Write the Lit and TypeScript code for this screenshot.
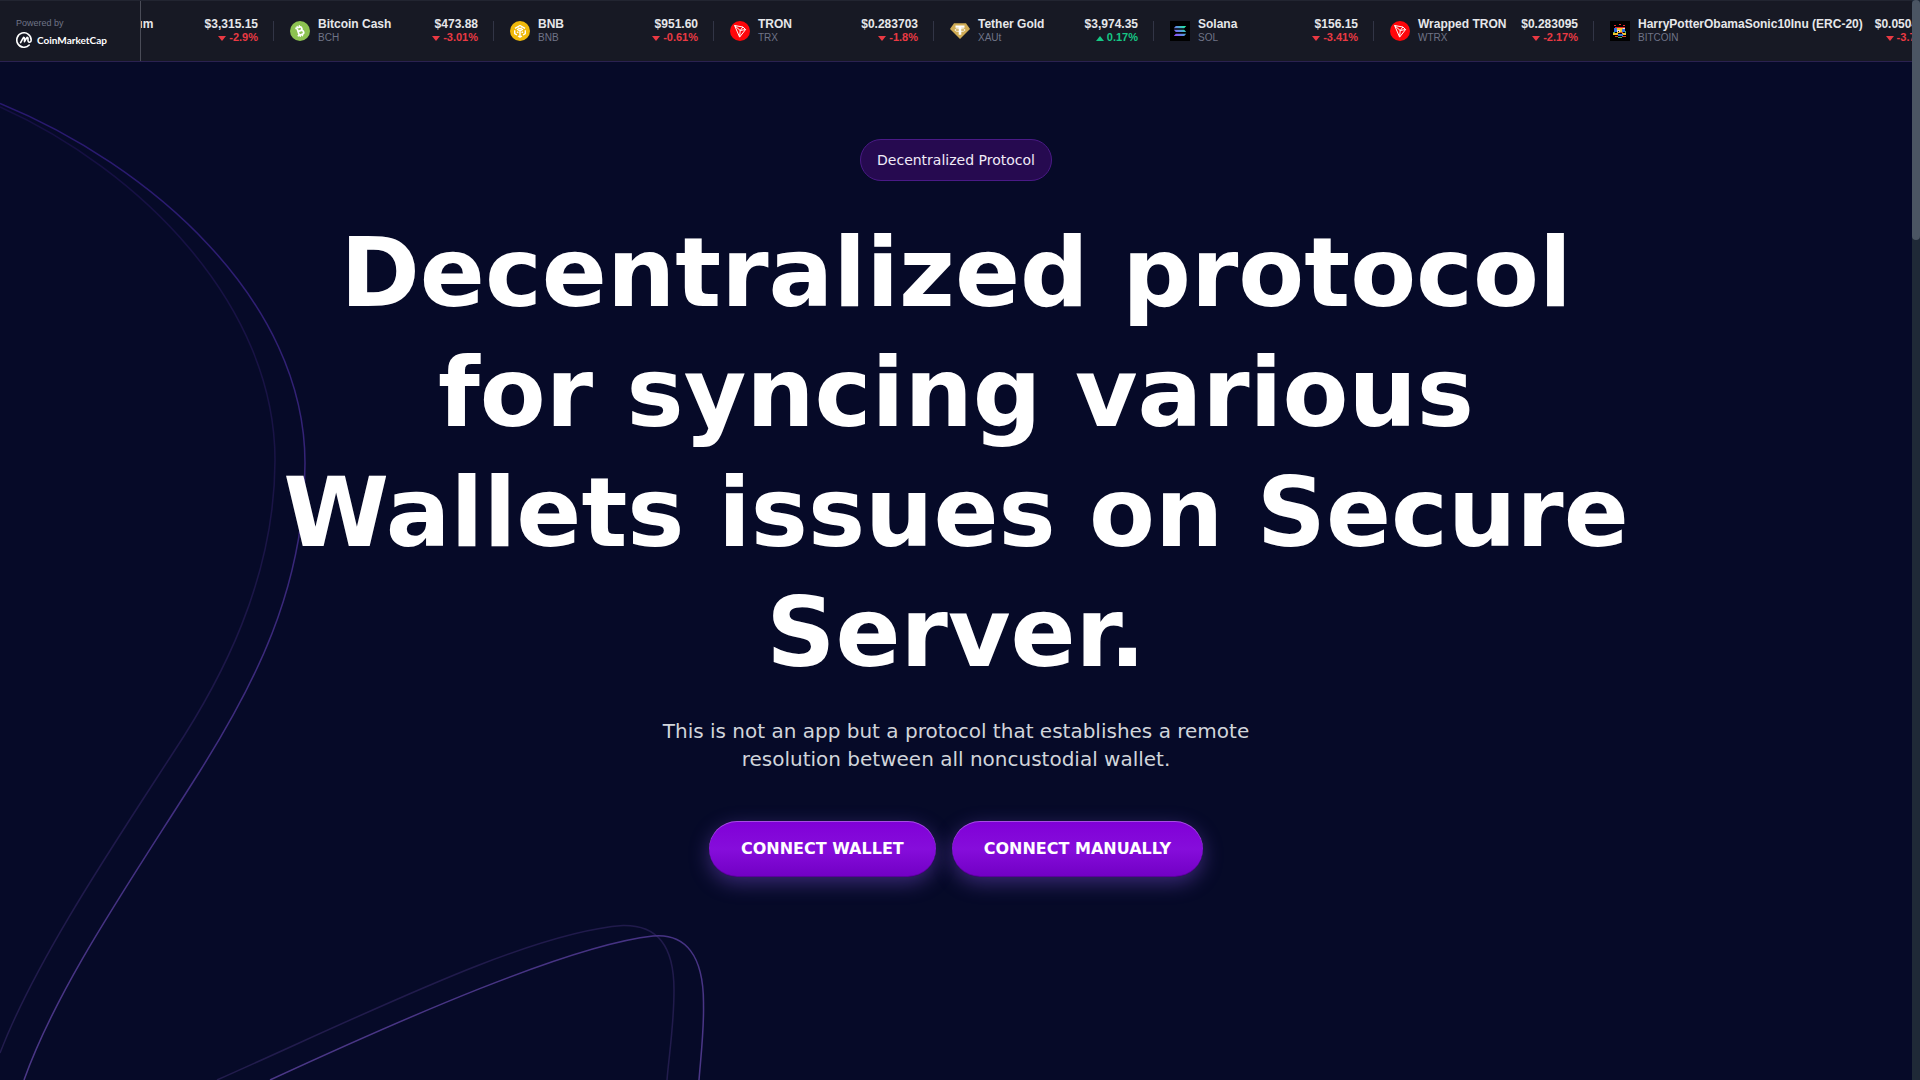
import { LitElement, html, css, svg, TemplateResult } from "lit";
import { customElement, property } from "lit/decorators.js";

type CoinArt = "eth" | "bch" | "bnb" | "tron" | "xaut" | "sol" | "hpos";

interface Quote {
  name: string;
  symbol: string;
  price: string;
  change: number;
  art: CoinArt;
}

const QUOTES: Quote[] = [
  { name: "Ethereum", symbol: "ETH", price: "$3,315.15", change: -2.9, art: "eth" },
  { name: "Bitcoin Cash", symbol: "BCH", price: "$473.88", change: -3.01, art: "bch" },
  { name: "BNB", symbol: "BNB", price: "$951.60", change: -0.61, art: "bnb" },
  { name: "TRON", symbol: "TRX", price: "$0.283703", change: -1.8, art: "tron" },
  { name: "Tether Gold", symbol: "XAUt", price: "$3,974.35", change: 0.17, art: "xaut" },
  { name: "Solana", symbol: "SOL", price: "$156.15", change: -3.41, art: "sol" },
  { name: "Wrapped TRON", symbol: "WTRX", price: "$0.283095", change: -2.17, art: "tron" },
  { name: "HarryPotterObamaSonic10Inu (ERC-20)", symbol: "BITCOIN", price: "$0.050412", change: -3.74, art: "hpos" },
];

const ART: Record<CoinArt, TemplateResult> = {
  eth: svg`<circle cx="10" cy="10" r="10" fill="#627eea"/>
    <path d="M10 3l4.500 7.200L10 13 5.500 10.200zM10 14l4.500-2.700L10 17.300 5.500 11.300z" fill="#fff"/>`,
  bch: svg`<circle cx="10" cy="10" r="10" fill="#8dc351"/>
    <g transform="rotate(-18 10 10)" fill="none" stroke="#fff">
      <path d="M6.300 6.100h4.400a1.800 1.800 0 0 1 0 3.700H8.300h2.800a2 2 0 0 1 0 4.100H6.300M8 6.100v7.800" stroke-width="1.700"/>
      <path d="M8.700 4.200v2M11 4.200v2M8.700 13.800v2M11 13.800v2" stroke-width="1.200"/>
    </g>`,
  bnb: svg`<circle cx="10" cy="10" r="10" fill="#f0b90b"/>
    <g fill="none" stroke="#fff" stroke-width="1.400" stroke-linejoin="round">
      <path d="M5 7.400L10 4.500l5 2.900M7 8.200l3 1.800 3-1.800M4.700 9.200v3.400l2.300 1.400M15.300 9.200v3.400L13 14M10 9.800v5.400M7 10.800l1.400.8M13 10.800l-1.400.8M8 15l2 1.100 2-1.100M8.200 6.900l1.800 1 1.800-1"/>
    </g>`,
  tron: svg`<circle cx="10" cy="10" r="10" fill="#ff060a"/>
    <path d="M4.600 4.500l8.300 1.500 2.700 2.500-6 7.600zM4.600 4.500l5.600 5 5.400-1M12.900 6l-2.700 3.500-.6 6.600" fill="none" stroke="#fff" stroke-width="1" stroke-linejoin="round"/>`,
  xaut: svg`<path d="M4 2.200h12l4 5.800-10 10L0 8z" fill="#d0ac55"/>
    <path d="M5.500 4.500h9v2.300H11.300v7H8.700v-7H5.500z" fill="#fff"/>
    <ellipse cx="10" cy="9" rx="5.200" ry="1.500" fill="none" stroke="#fff" stroke-width=".8"/>`,
  sol: svg`<defs><linearGradient id="sol-mark" x1="4" y1="15" x2="16" y2="5" gradientUnits="userSpaceOnUse">
      <stop offset="0" stop-color="#9945ff"/><stop offset=".5" stop-color="#5d8fe0"/><stop offset="1" stop-color="#19fb9b"/></linearGradient></defs>
    <rect width="20" height="20" fill="#000"/>
    <path d="M5.800 5h10.400l-2 2.300H3.800zM3.800 8.800h10.400l2 2.300H5.800zM5.800 12.700h10.400l-2 2.300H3.800z" fill="url(#sol-mark)"/>`,
  hpos: svg`<rect width="20" height="20" fill="#000"/>
    <path d="M4 4h2v1H4zM9 3h2v1H9zM13 4h2v1h-2zM5 6h10v1H5z" fill="#e3262d"/>
    <path d="M6 7h7v2H6zM3 12h5v2H3zM12 12h4v2h-4z" fill="#f4c430"/>
    <path d="M4 7h3v4H4zM12 8h3v3h-3zM8 13h5v2H8z" fill="#2f6fe0"/>
    <path d="M7 9h3v2H7zM13 7h2v1h-2z" fill="#e8e4d8"/>
    <path d="M5 15h3v1H5zM12 15h4v1h-4zM10 11h3v1h-3z" fill="#d0472c"/>
    <path d="M7 11h3v1H7zM10 9h2v2h-2z" fill="#f4c430"/>
    <path d="M8 10h1v1H8z" fill="#111"/>
    <path d="M3 11h2v1H3zM15 10h1v2h-1zM8 16h4v1H8z" fill="#4fae5a"/>`,
};

@customElement("coin-quote")
export class CoinQuote extends LitElement {
  @property({ attribute: false }) quote!: Quote;

  static styles = css`
    :host {
      display: flex;
      flex: none;
      align-items: center;
      min-width: 220px;
      box-sizing: border-box;
    }
    .quote {
      display: flex;
      flex: 1;
      align-items: center;
      gap: 8px;
      padding: 0 15px 0 16px;
      color: inherit;
      text-decoration: none;
    }
    .rule {
      width: 1px;
      height: 20px;
      background: #323546;
    }
    .art {
      width: 20px;
      height: 20px;
      flex: none;
    }
    .label,
    .value {
      display: flex;
      flex-direction: column;
      padding-bottom: 2px;
      white-space: nowrap;
    }
    .label {
      flex: 1;
    }
    .value {
      align-items: flex-end;
      margin-left: 4px;
    }
    .name,
    .price {
      font-size: 12px;
      line-height: 14px;
      font-weight: 700;
      color: #e6e7ea;
    }
    .symbol {
      font-size: 10px;
      line-height: 13px;
      color: #6f7487;
    }
    .change {
      display: flex;
      align-items: center;
      gap: 3px;
      font-size: 11px;
      line-height: 13px;
      font-weight: 700;
      color: #ea3943;
    }
    .change.up {
      color: #16c784;
    }
    .arrow {
      width: 8px;
      height: 5px;
      margin-top: 2px;
      fill: currentColor;
    }
  `;

  render() {
    const q = this.quote;
    const up = q.change > 0;
    return html`
      <a class="quote" href="#${q.symbol}">
        <svg class="art" viewBox="0 0 20 20" aria-hidden="true">${ART[q.art]}</svg>
        <span class="label">
          <span class="name">${q.name}</span>
          <span class="symbol">${q.symbol}</span>
        </span>
        <span class="value">
          <span class="price">${q.price}</span>
          <span class="change ${up ? "up" : "down"}">
            <svg class="arrow" viewBox="0 0 8 5" aria-hidden="true">
              <path d=${up ? "M0 5L4 0l4 5z" : "M0 0h8L4 5z"} />
            </svg>
            ${q.change}%
          </span>
        </span>
      </a>
      <span class="rule"></span>
    `;
  }
}

@customElement("price-ticker")
export class PriceTicker extends LitElement {
  /* Distance, in pixels, that the strip has scrolled to the left. */
  @property({ type: Number }) scrolled = 87;

  static styles = css`
    :host {
      display: flex;
      height: 60px;
      border-top: 1px solid #222531;
      border-bottom: 1px solid #2a2150;
      background: #171924;
      font-family: "Liberation Sans", Arial, sans-serif;
    }
    .source {
      display: flex;
      flex-direction: column;
      justify-content: center;
      gap: 3px;
      box-sizing: border-box;
      width: 141px;
      flex: none;
      padding: 2px 0 0 16px;
      border-right: 1px solid #4a4c57;
      color: #fff;
      text-decoration: none;
    }
    .powered {
      font-size: 9px;
      line-height: 12px;
      color: #6f7487;
    }
    .brand {
      display: flex;
      align-items: center;
      gap: 5px;
      font-family: Lato, sans-serif;
      font-weight: 700;
      font-size: 10px;
      line-height: 16px;
    }
    .mark {
      width: 16px;
      height: 16px;
    }
    .window {
      flex: 1;
      min-width: 0;
      overflow: hidden;
      display: flex;
    }
    .strip {
      display: flex;
      flex: none;
    }
  `;

  render() {
    return html`
      <a class="source" href="#coinmarketcap">
        <span class="powered">Powered by</span>
        <span class="brand">
          <svg class="mark" viewBox="0 0 16 16" fill="none" stroke="#fff" stroke-width="1.600" stroke-linecap="round" stroke-linejoin="round" aria-hidden="true">
            <path d="M13.200 13A7.200 7.200 0 1 1 15.200 8c0 2.600-2.700 3-3.200.9V6.300c0-1-.9-1.200-1.300-.4L8.500 9.700V6.300c0-1-.9-1.200-1.300-.4L4.600 10.600" />
          </svg>
          CoinMarketCap
        </span>
      </a>
      <div class="window">
        <div class="strip" style="transform: translateX(${-this.scrolled}px)">
          ${QUOTES.map((q) => html`<coin-quote .quote=${q}></coin-quote>`)}
        </div>
      </div>
    `;
  }
}

@customElement("app-root")
export class AppRoot extends LitElement {
  static styles = css`
    :host {
      display: flex;
      min-height: 100vh;
      background: #060a28;
      color: #fff;
      font-family: "DejaVu Sans", sans-serif;
    }
    .page {
      position: relative;
      flex: 1;
      min-width: 0;
      display: flex;
      flex-direction: column;
    }
    .waves {
      position: absolute;
      left: 0;
      top: 0;
      width: 720px;
      height: 1080px;
      fill: none;
      pointer-events: none;
    }
    .hero {
      position: relative;
      display: flex;
      flex-direction: column;
      align-items: center;
      padding: 77px 24px 80px;
      text-align: center;
    }
    .badge {
      padding: 10px 16px;
      border: 1px solid #4a1a86;
      border-radius: 21px;
      background: #260a50;
      font-size: 14px;
      line-height: 20px;
      color: #f0eaf8;
    }
    .title {
      max-width: 1400px;
      margin: 32px 0 0;
      font-size: 96px;
      line-height: 120px;
      font-weight: 700;
    }
    .lead {
      max-width: 672px;
      margin: 24px 0 0;
      font-size: 20px;
      line-height: 28px;
      color: #d1d5db;
    }
    .actions {
      display: flex;
      flex-wrap: wrap;
      justify-content: center;
      gap: 16px;
      margin-top: 48px;
    }
    .action {
      padding: 16px 32px;
      border: 0;
      border-radius: 28px;
      background: linear-gradient(180deg, #8000d7 0%, #860ddb 50%, #7100c4 100%);
      box-shadow:
        inset 0 1px 0 rgba(255, 255, 255, 0.3),
        inset 0 -1px 0 rgba(0, 0, 0, 0.2),
        0 6px 20px rgba(120, 80, 210, 0.45);
      color: #fff;
      font: 700 16px/24px "DejaVu Sans", sans-serif;
      text-transform: uppercase;
      cursor: pointer;
    }
    .scrollbar {
      width: 8px;
      flex: none;
      background: #1f2937;
    }
    .thumb {
      height: 240px;
      border-radius: 4px;
      background: #4b5563;
    }
  `;

  render() {
    return html`
      <div class="page">
        <svg class="waves" viewBox="0 0 720 1080" aria-hidden="true">
          <defs>
            <linearGradient id="wave" x1="0" y1="100" x2="0" y2="1080" gradientUnits="userSpaceOnUse">
              <stop offset="0" stop-color="#28186f" />
              <stop offset="1" stop-color="#4b3787" />
            </linearGradient>
            <linearGradient id="wave-faint" x1="0" y1="100" x2="0" y2="1080" gradientUnits="userSpaceOnUse">
              <stop offset="0" stop-color="#150f43" />
              <stop offset="1" stop-color="#221c4d" />
            </linearGradient>
          </defs>
          <g stroke="url(#wave-faint)" stroke-width="1.500">
            <path d="M0 107C140 170 275 305 275 460C275 580 220 682 173 753C110 850 35 962 0 1053" />
            <path d="M217 1080C370 1012 530 932 623 925.500C657 925 674 945 674 990C674 1025 669 1055 667 1080" />
          </g>
          <g stroke="url(#wave)" stroke-width="1.500">
            <path d="M0 103.500C150 165 305 300 305 463C305 590 252 688 200 771C130 882 58 985 24 1080" />
            <path d="M270 1080C400 1020 570 945 653 936C685 933 704 955 703.500 1005C704 1030 701 1055 699 1080" />
          </g>
        </svg>
        <price-ticker></price-ticker>
        <main class="hero">
          <span class="badge">Decentralized Protocol</span>
          <h1 class="title">Decentralized protocol for syncing various Wallets issues on Secure Server.</h1>
          <p class="lead">
            This is not an app but a protocol that establishes a remote resolution between all noncustodial wallet.
          </p>
          <div class="actions">
            <button class="action" type="button">Connect Wallet</button>
            <button class="action" type="button">Connect Manually</button>
          </div>
        </main>
      </div>
      <div class="scrollbar" aria-hidden="true"><div class="thumb"></div></div>
    `;
  }
}
